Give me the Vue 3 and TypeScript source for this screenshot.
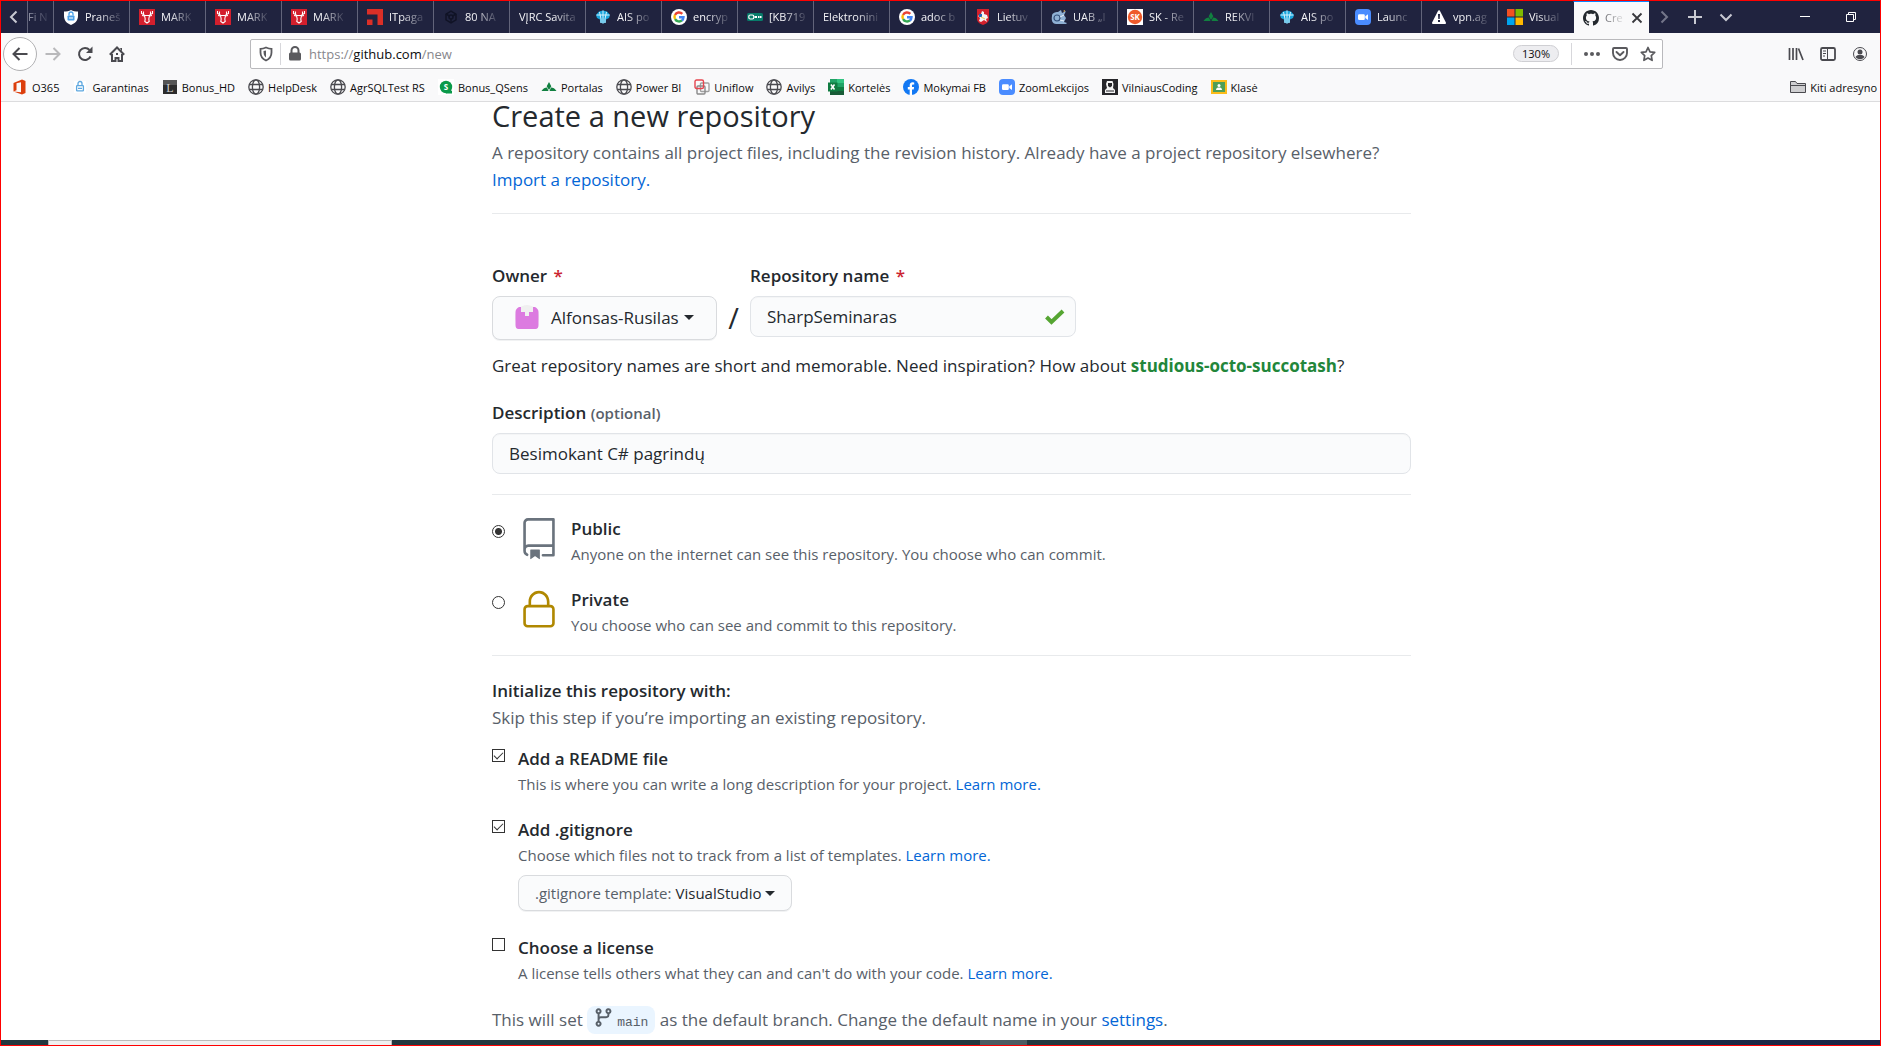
<script setup lang="ts">
import { ref } from 'vue'

interface Entry { title: string; icon: string }

const tabs: Entry[] = [
  { title: 'Praneš', icon: 'shield' },
  { title: 'MARK', icon: 'moose' },
  { title: 'MARK', icon: 'moose' },
  { title: 'MARK', icon: 'moose' },
  { title: 'ITpaga', icon: 'it' },
  { title: '80 NA', icon: 'hex' },
  { title: 'VĮRC Savita', icon: '' },
  { title: 'AIS po', icon: 'ais' },
  { title: 'encryp', icon: 'google' },
  { title: '[KB719', icon: 'kb' },
  { title: 'Elektronini', icon: '' },
  { title: 'adoc b', icon: 'google' },
  { title: 'Lietuv', icon: 'vytis' },
  { title: 'UAB „I', icon: 'bird' },
  { title: 'SK - Re', icon: 'sk' },
  { title: 'REKVI', icon: 'leaf' },
  { title: 'AIS po', icon: 'ais' },
  { title: 'Launc', icon: 'zoom' },
  { title: 'vpn.ag', icon: 'warn' },
  { title: 'Visual', icon: 'ms' },
]

const marks: Entry[] = [
  { title: 'O365', icon: 'office' },
  { title: 'Garantinas', icon: 'padlock' },
  { title: 'Bonus_HD', icon: 'lbox' },
  { title: 'HelpDesk', icon: 'globe' },
  { title: 'AgrSQLTest RS', icon: 'globe' },
  { title: 'Bonus_QSens', icon: 'qs' },
  { title: 'Portalas', icon: 'leaf' },
  { title: 'Power BI', icon: 'globe' },
  { title: 'Uniflow', icon: 'uni' },
  { title: 'Avilys', icon: 'globe' },
  { title: 'Kortelės', icon: 'excel' },
  { title: 'Mokymai FB', icon: 'fb' },
  { title: 'ZoomLekcijos', icon: 'zoom' },
  { title: 'VilniausCoding', icon: 'hood' },
  { title: 'Klasė', icon: 'klase' },
]

const art: Record<string, string> = {
  shield: '<path fill="#fff" d="M8 1c2 1 4.500 1.500 7 1.500V7c0 4.500-3 7.500-7 9-4-1.500-7-4.500-7-9V2.500C3.500 2.500 6 2 8 1z"/><rect x="4.500" y="6.500" width="7" height="5" rx=".8" fill="#4a9fe8"/><path d="M6 6.500V5a2 2 0 0 1 4 0v1.500" fill="none" stroke="#4a9fe8" stroke-width="1.300"/><path d="M6 9h4" stroke="#fff"/>',
  moose: '<path fill="#d31f2d" d="M0 0h16v16H0z"/><g fill="none" stroke="#fff" stroke-width="1.100"><path d="M2.500 2v2.500L5.500 6M13.500 2v2.500L10.500 6M4.500 2.500V5M11.500 2.500V5M3 6.500l2.500.5M13 6.500l-2.500.5M5.500 6.500h5L9.800 10l.4 2.500L8 14l-2.200-1.500.4-2.500z"/></g>',
  it: '<path fill="#dc2f27" d="M0 0h16v16h-5.500V5.500H0zM0 10.500h5.500V16H0z"/>',
  hex: '<g fill="none" stroke="#101326" stroke-width="1.500"><path d="M8 2.200l5 2.900v5.800l-5 2.900-5-2.900V5.100z"/><circle cx="8" cy="8" r="2"/><path d="M3 5l3.500 2M13 5L9.500 7M8 10v4"/></g>',
  ais: '<path fill="#1aa5dc" d="M4 2.500l4-1 4 1L15 6l-1 3-3 1.500v3L8 14.500l-3-1v-3L2 9 1 6z"/><path fill="none" stroke="#e8f8ff" stroke-width=".9" d="M1.500 6h13M8 1.500v13M4.500 3L6 10v4M11.500 3L10 10v4"/>',
  google: '<circle cx="8" cy="8" r="8" fill="#fff"/><g fill="none" stroke-width="2.400"><path stroke="#ea4335" d="M4 6A4.500 4.500 0 0 1 11.300 4.900"/><path stroke="#fbbc05" d="M4.100 10.200A4.500 4.500 0 0 1 4 5.900"/><path stroke="#34a853" d="M11 11.400A4.500 4.500 0 0 1 4.100 10.100"/><path stroke="#4285f4" d="M8 8.200h4.500A4.500 4.500 0 0 1 10.900 11.500"/></g>',
  kb: '<rect y="4" width="16" height="8" rx="1.500" fill="#087b6a"/><rect x="1.800" y="6" width="5" height="4" rx="1.500" fill="none" stroke="#fff" stroke-width="1.200"/><path fill="#fff" d="M7.500 7H10v2H7.500zM11 7h1.500v2H11zM13 7h1.500v2H13z"/>',
  vytis: '<path fill="#d2202c" d="M2 0h12v10c0 3-3 5-6 6-3-1-6-3-6-6z"/><path fill="#f3f3f3" d="M4 12l1-3-2-2 3-2 1-3 2 1v2l3 1 1 3-2 1 1 3-3-2-3 2z"/><path fill="#2467b5" d="M4 5h3v3H4z"/><path stroke="#f2c84b" d="M6 8l4 2"/>',
  bird: '<path fill="#8fb0d4" d="M1 7c0-3 3-4 6-4l3-2 1 3 4-2-2 4 2 3-2 4 3 1-1 1H5c-3 0-5-3-4-8z"/><circle cx="6" cy="9" r="3" fill="none" stroke="#34507a" stroke-width="1.200"/><path stroke="#e9f0f8" d="M9 8l4-2M9 11l4 1"/><path fill="#d7a953" d="M12 2l2-1v2z"/>',
  sk: '<path fill="#fff" d="M0 0h16v16H0z"/><circle cx="8" cy="8" r="7.200" fill="#ee5a2b"/><text x="8" y="11" font-size="8" font-weight="700" text-anchor="middle" fill="#fff" font-family="Open Sans">SK</text>',
  leaf: '<path fill="#118040" d="M8 3l2.300 4.200L8 11 5.700 7.200zM.5 12C2 9.500 4 8.500 6 8.500l1.500 3.500zM15.500 12C14 9.500 12 8.500 10 8.500L8.500 12z"/>',
  zoom: '<rect width="16" height="16" rx="4" fill="#4a8cff"/><rect x="3" y="5.200" width="6.800" height="5.800" rx="1.200" fill="#fff"/><path fill="#fff" d="M10.300 7.300L13 5.300v5.600l-2.700-2z"/>',
  warn: '<path fill="#fff" stroke="#fff" stroke-width="2" stroke-linejoin="round" d="M8 2.200L14 14H2z"/><path fill="#20233f" d="M7 5h2l-.3 5H7.300zM7 11h2v2H7z"/>',
  ms: '<path fill="#f25022" d="M0 0h7.500v7.500H0z"/><path fill="#7fba00" d="M8.500 0H16v7.500H8.500z"/><path fill="#00a4ef" d="M0 8.500h7.500V16H0z"/><path fill="#ffb900" d="M8.500 8.500H16V16H8.500z"/>',
  github: '<path fill="#24292e" fill-rule="evenodd" d="M8 0C3.580 0 0 3.580 0 8c0 3.540 2.290 6.530 5.470 7.590.4.070.55-.17.55-.38 0-.19-.01-.82-.01-1.490-2.010.37-2.530-.49-2.690-.94-.09-.23-.48-.94-.82-1.130-.28-.15-.68-.52-.01-.53.63-.01 1.080.58 1.230.82.72 1.210 1.870.87 2.330.66.07-.52.28-.87.51-1.070-1.780-.2-3.640-.89-3.640-3.950 0-.87.31-1.590.82-2.150-.08-.2-.36-1.020.08-2.120 0 0 .67-.21 2.200.82.64-.18 1.320-.27 2-.27s1.360.09 2 .27c1.530-1.040 2.200-.82 2.200-.82.44 1.100.16 1.920.08 2.120.51.56.82 1.270.82 2.150 0 3.070-1.870 3.750-3.650 3.950.29.25.54.73.54 1.480 0 1.070-.01 1.930-.01 2.200 0 .21.15.46.55.38A8.010 8.010 0 0 0 16 8c0-4.420-3.580-8-8-8z"/>',
  office: '<path fill="#dc3e0c" d="M1.500 4L10 .5 13.500 2v12L10 15.500 1.500 12.500l7.500.8V3.200L4.500 4.300v7L1.500 12.500z"/>',
  padlock: '<path fill="#fff" d="M2 2h12v12H2z"/><rect x="4.600" y="6.600" width="6.800" height="5.300" rx=".6" fill="none" stroke="#5ea8e0" stroke-width="1.300"/><path d="M6 6.500V4.500a2 2 0 0 1 4 0v2M6 9.300h4" fill="none" stroke="#5ea8e0" stroke-width="1.300"/>',
  lbox: '<path fill="#2c2c2c" d="M1 1h14v14H1z"/><path fill="#555" d="M1 1h14v5H1z"/><text x="8" y="13" font-size="12" text-anchor="middle" fill="#ccc" font-family="Liberation Serif">L</text>',
  globe: '<g fill="none" stroke="#4a4a4f" stroke-width="1.300"><circle cx="8" cy="8" r="7.200"/><ellipse cx="8" cy="8" rx="3.600" ry="7.200"/><path d="M1.500 5.500h13M1.500 10.500h13"/></g>',
  qs: '<path fill="#fff" d="M0 0h16v16H0z"/><circle cx="8" cy="8" r="6.200" fill="#0a9a4a"/><path fill="#0a9a4a" d="M8 8l6 4v2.500H8z"/><text x="8" y="11" font-size="8" font-weight="700" text-anchor="middle" fill="#fff" font-family="Open Sans">S</text>',
  uni: '<g fill="none" stroke-width="1.400"><rect x="6.500" y="4" width="8.500" height="8.500" rx="1" stroke="#a0a0a0"/><rect x="3" y="7" width="8" height="8" rx="1" stroke="#8a8a8a"/><rect x="1" y="1" width="8.500" height="8.500" rx="1.500" stroke="#e6454f"/></g>',
  excel: '<path fill="#21a366" d="M2 0h14v8H2z"/><path fill="#33c481" d="M9 0h7v4H9z"/><path fill="#107c41" d="M9 8h7v4H9z"/><path fill="#185c37" d="M2 8h7v4h7v4H2z"/><path fill="#107c41" d="M0 3.500h9.500v9H0z"/><path stroke="#fff" stroke-width="1.500" d="M2.900 5.500l3.600 5M6.500 5.500l-3.600 5"/>',
  fb: '<circle cx="8" cy="8" r="8" fill="#1278f3"/><path fill="#fff" d="M6.700 16v-5.500H4.800V8h1.900V6.300c0-2 1.200-3 2.900-3l1.600.1v2.100h-1c-.9 0-1.200.5-1.200 1.100V8h2.100l-.4 2.500H9V16z"/>',
  hood: '<path fill="#26262a" d="M0 0h16v16H0z"/><path fill="#f3f3f3" d="M5 2h5.500l1 3-.5 4 2 2v3H3v-3l2-2-1-4z"/><path fill="#26262a" d="M6 4h4v3l-2 1.500L6 7z"/><path stroke="#26262a" d="M4 12h8"/>',
  klase: '<path fill="#fbbc1a" d="M0 1h16v14H0z"/><path fill="#4f9e57" d="M2 3h12v10H2z"/><circle cx="8" cy="6.500" r="1.500" fill="#fff"/><path fill="#fff" d="M5 11c0-2 1.500-2.500 3-2.500s3 .5 3 2.500z"/>',
}

const repoName = ref('SharpSeminaras')
const description = ref('Besimokant C# pagrindų')
const visibility = ref('public')
const readme = ref(true)
const gitignore = ref(true)
const license = ref(false)
</script>

<template>
  <div class="window">
    <header class="tabstrip">
      <button class="scroll-tabs" aria-label="Scroll tabs left">
        <svg width="16" height="16" viewBox="0 0 16 16"><path d="M10.500 2.500L5 8l5.500 5.500" fill="none" stroke="#c8c9d2" stroke-width="2" /></svg>
      </button>
      <div class="tab cut"><span class="tab-title">Fi N</span></div>
      <div v-for="(t, i) in tabs" :key="i" class="tab">
        <svg v-if="t.icon" class="fav" viewBox="0 0 16 16" v-html="art[t.icon]" />
        <span class="tab-title">{{ t.title }}</span>
      </div>
      <div class="tab active">
        <svg class="fav" viewBox="0 0 16 16" v-html="art.github" />
        <span class="tab-title">Cre</span>
        <button class="close" aria-label="Close tab">
          <svg width="12" height="12" viewBox="0 0 12 12"><path d="M1.500 1.500l9 9M10.500 1.500l-9 9" stroke="#38383d" stroke-width="1.800" /></svg>
        </button>
      </div>
      <div class="strip-tools">
        <button aria-label="Scroll tabs right"><svg width="16" height="16" viewBox="0 0 16 16"><path d="M5.500 2.500L11 8l-5.500 5.500" fill="none" stroke="#74768a" stroke-width="2" /></svg></button>
        <button aria-label="New tab"><svg width="16" height="16" viewBox="0 0 16 16"><path d="M8 1v14M1 8h14" stroke="#c8c9d2" stroke-width="2" /></svg></button>
        <button aria-label="List all tabs"><svg width="16" height="16" viewBox="0 0 16 16"><path d="M2.500 5.500L8 11l5.500-5.500" fill="none" stroke="#c8c9d2" stroke-width="2" /></svg></button>
      </div>
      <div class="win-tools">
        <button aria-label="Minimize"><svg width="12" height="12" viewBox="0 0 12 12"><path d="M1 5.500h10" stroke="#fff" /></svg></button>
        <button aria-label="Restore"><svg width="12" height="12" viewBox="0 0 12 12"><path d="M1.500 3.500h7v7h-7zM3.500 3.500v-2h7v7h-2" fill="none" stroke="#fff" /></svg></button>
      </div>
    </header>

    <nav class="toolbar">
      <div class="nav-buttons">
        <button class="back" aria-label="Back"><svg width="16" height="16" viewBox="0 0 16 16"><path d="M15.500 8H1.500M7.500 2L1.500 8l6 6" fill="none" stroke="#4a4a4f" stroke-width="2" /></svg></button>
        <button aria-label="Forward"><svg width="16" height="16" viewBox="0 0 16 16"><path d="M.5 8h14M8.500 2l6 6-6 6" fill="none" stroke="#b9b9bb" stroke-width="2" /></svg></button>
        <button aria-label="Reload"><svg width="16" height="16" viewBox="0 0 16 16"><path d="M13.500 10.500A6 6 0 1 1 12.500 4" fill="none" stroke="#4a4a4f" stroke-width="2" /><path fill="#4a4a4f" d="M15.500.5v6.500H9z" /></svg></button>
        <button aria-label="Home"><svg width="16" height="16" viewBox="0 0 16 16"><path d="M.8 8.700L8 1.500l7.200 7.200" fill="none" stroke="#4a4a4f" stroke-width="2" /><path d="M3 8v7h3.500v-3h3v3H13V8" fill="none" stroke="#4a4a4f" stroke-width="2" /><path fill="#4a4a4f" d="M7 7h2v2H7zM11 2h2v4z" /></svg></button>
      </div>
      <div class="urlbar">
        <svg width="14" height="16" viewBox="0 0 14 16"><path d="M7 1.500c2 .9 4 1.300 5.500 1.300v3.700c0 4-2.200 6.500-5.500 8-3.300-1.500-5.500-4-5.500-8V2.800C3 2.800 5 2.400 7 1.500z" fill="none" stroke="#5a5a5e" stroke-width="1.800" /><path fill="#5a5a5e" d="M7 4.500v7C5 10 4.500 8.500 4.500 5z" /></svg>
        <span class="sep" />
        <svg width="14" height="16" viewBox="0 0 14 16"><rect x="1" y="6.500" width="12" height="8" rx="1.500" fill="#5a5a5e" /><path d="M3.500 7V4.500a3.500 3.500 0 0 1 7 0V7" fill="none" stroke="#5a5a5e" stroke-width="2" /></svg>
        <span class="url">https://<b>github.com</b>/new</span>
        <button class="zoom">130%</button>
        <span class="sep tall" />
        <button aria-label="Page actions"><svg width="16" height="16" viewBox="0 0 16 16"><circle cx="2" cy="8" r="2" fill="#5a5a5e" /><circle cx="8" cy="8" r="2" fill="#5a5a5e" /><circle cx="14" cy="8" r="2" fill="#5a5a5e" /></svg></button>
        <button aria-label="Save to Pocket"><svg width="16" height="16" viewBox="0 0 16 16"><path d="M2 2h12a1 1 0 0 1 1 1v4A7 7 0 0 1 1 7V3a1 1 0 0 1 1-1zM4.500 6L8 9.300 11.500 6" fill="none" stroke="#5a5a5e" stroke-width="1.900" stroke-linejoin="round" stroke-linecap="round" /></svg></button>
        <button aria-label="Bookmark page"><svg width="16" height="16" viewBox="0 0 16 16"><path d="M8 1.500l2 4.300 4.700.6-3.400 3.200.8 4.700L8 12l-4.100 2.300.8-4.700L1.300 6.400 6 5.800z" fill="none" stroke="#5a5a5e" stroke-width="1.700" stroke-linejoin="round" /></svg></button>
      </div>
      <div class="right-tools">
        <button aria-label="Library"><svg width="16" height="16" viewBox="0 0 16 16"><path d="M1.500 2v12M5 2v12M8.500 2v12M10.500 2.500l4.500 11.500" stroke="#4a4a4f" stroke-width="1.700" /></svg></button>
        <button aria-label="Sidebars"><svg width="16" height="16" viewBox="0 0 16 16"><rect x="1" y="2" width="14" height="12" rx="1.500" fill="none" stroke="#4a4a4f" stroke-width="1.800" /><path d="M7.500 2v12M3 5h3M3 7.500h3M3 10h2" stroke="#4a4a4f" /></svg></button>
        <button aria-label="Account"><svg width="16" height="16" viewBox="0 0 16 16"><circle cx="8" cy="8" r="6.500" fill="none" stroke="#4a4a4f" /><circle cx="8" cy="6" r="2.500" fill="#4a4a4f" /><path fill="#4a4a4f" d="M3.500 11c1-1.800 2.500-2 4.500-2s3.500.2 4.500 2c-2.500 3-6.500 3-9 0z" /></svg></button>
      </div>
    </nav>

    <nav class="bookmarks">
      <a v-for="m in marks" :key="m.title" href="#" class="mark">
        <svg class="fav" viewBox="0 0 16 16" v-html="art[m.icon]" />{{ m.title }}
      </a>
      <a href="#" class="mark other">
        <svg class="fav" viewBox="0 0 16 16"><path d="M.5 13.500v-11h5l1.500 2h8.500v9zM.5 6.500h15" fill="#cfcfd1" stroke="#4a4a4f" /></svg>Kiti adresyno
      </a>
    </nav>

    <main class="page">
      <form class="form" @submit.prevent>
        <h1>Create a new repository</h1>
        <p class="lead muted">A repository contains all project files, including the revision history. Already have a project repository elsewhere?<br><a href="#">Import a repository.</a></p>
        <hr>
        <div class="name-row">
          <div class="field owner">
            <label for="owner">Owner <span class="req">*</span></label>
            <button id="owner" class="btn owner-btn" type="button">
              <svg width="24" height="24" viewBox="0 0 24 24"><circle cx="12" cy="12" r="12" fill="#f0f0f0" /><path fill="#dc7be0" d="M4 2h2v5h4v4h4V7h4V2h2q3.500 2 3.500 5v13q0 4-3 4h-17q-3 0-3-4V7Q.5 4 4 2z" /></svg>
              <span>Alfonsas-Rusilas</span><i class="caret" />
            </button>
          </div>
          <span class="slash">/</span>
          <div class="field">
            <label for="repo">Repository name <span class="req">*</span></label>
            <div class="checked">
              <input id="repo" v-model="repoName" class="text" type="text">
              <svg width="22" height="18" viewBox="0 0 22 18"><path d="M2.500 9l5 5L19 3" fill="none" stroke="#55a532" stroke-width="4" /></svg>
            </div>
          </div>
        </div>
        <p class="hint">Great repository names are short and memorable. Need inspiration? How about <strong>studious-octo-succotash</strong>?</p>
        <div class="field desc">
          <label for="desc">Description <small>(optional)</small></label>
          <input id="desc" v-model="description" class="text" type="text">
        </div>
        <hr>
        <div class="visibility">
          <div class="choice">
            <input id="public" v-model="visibility" type="radio" value="public">
            <svg width="42" height="42" viewBox="0 0 24 24"><path fill="#6a737d" fill-rule="evenodd" d="M3 2.750A2.750 2.750 0 0 1 5.750 0h14.500a.75.75 0 0 1 .75.75v20.500a.75.75 0 0 1-.75.75h-6a.75.75 0 0 1 0-1.500h5.250v-4H6A1.500 1.500 0 0 0 4.500 18v.75c0 .716.430 1.334 1.050 1.605a.75.75 0 0 1-.6 1.374A3.250 3.250 0 0 1 3 18.750v-16zM19.500 1.500V15H6c-.546 0-1.059.146-1.500.401V2.750c0-.69.56-1.250 1.250-1.250H19.500z" /><path fill="#6a737d" d="M7 18.250a.25.25 0 0 1 .25-.25h5a.25.25 0 0 1 .25.25v5.010a.25.25 0 0 1-.397.201l-2.206-1.604a.25.25 0 0 0-.294 0L7.397 23.460a.25.25 0 0 1-.397-.2v-5.010z" /></svg>
            <div><label for="public">Public</label><p class="note">Anyone on the internet can see this repository. You choose who can commit.</p></div>
          </div>
          <div class="choice">
            <input id="private" v-model="visibility" type="radio" value="private">
            <svg width="42" height="42" viewBox="0 0 24 24"><path fill="#b08800" fill-rule="evenodd" d="M6 9V7.250C6 3.845 8.503 1 12 1s6 2.845 6 6.250V9h.5a2.500 2.500 0 0 1 2.500 2.500v8a2.500 2.500 0 0 1-2.500 2.500h-13A2.500 2.500 0 0 1 3 19.500v-8A2.500 2.500 0 0 1 5.500 9H6zm1.500-1.750C7.500 4.580 9.422 2.500 12 2.500c2.578 0 4.500 2.080 4.500 4.750V9h-9V7.250zm-3 4.250a1 1 0 0 1 1-1h13a1 1 0 0 1 1 1v8a1 1 0 0 1-1 1h-13a1 1 0 0 1-1-1v-8z" /></svg>
            <div><label for="private">Private</label><p class="note">You choose who can see and commit to this repository.</p></div>
          </div>
        </div>
        <hr>
        <section class="init">
          <h2>Initialize this repository with:</h2>
          <p class="muted">Skip this step if you’re importing an existing repository.</p>
          <div class="options">
            <div class="option">
              <input id="readme" v-model="readme" type="checkbox">
              <div><label for="readme">Add a README file</label><p class="note">This is where you can write a long description for your project. <a href="#">Learn more.</a></p></div>
            </div>
            <div class="option">
              <input id="gitignore" v-model="gitignore" type="checkbox">
              <div>
                <label for="gitignore">Add .gitignore</label><p class="note">Choose which files not to track from a list of templates. <a href="#">Learn more.</a></p>
                <button class="btn template" type="button"><span class="muted">.gitignore template:</span> <span>VisualStudio</span><i class="caret" /></button>
              </div>
            </div>
            <div class="option">
              <input id="license" v-model="license" type="checkbox">
              <div><label for="license">Choose a license</label><p class="note">A license tells others what they can and can't do with your code. <a href="#">Learn more.</a></p></div>
            </div>
          </div>
        </section>
        <p class="branch-line muted">This will set <span class="branch"><svg width="21" height="21" viewBox="0 0 16 16"><path fill="#586069" fill-rule="evenodd" d="M11.750 2.500a.75.75 0 1 0 0 1.500.75.75 0 0 0 0-1.500zm-2.250.75a2.250 2.250 0 1 1 3 2.122V6A2.500 2.500 0 0 1 10 8.500H6a1 1 0 0 0-1 1v1.128a2.251 2.251 0 1 1-1.500 0V5.372a2.250 2.250 0 1 1 1.500 0v1.836A2.492 2.492 0 0 1 6 7h4a1 1 0 0 0 1-1v-.628A2.250 2.250 0 0 1 9.500 3.250zM4.250 12a.75.75 0 1 0 0 1.500.75.75 0 0 0 0-1.500zM3.500 3.250a.75.75 0 1 1 1.500 0 .75.75 0 0 1-1.500 0z" /></svg><code>main</code></span> as the default branch. Change the default name in your <a href="#">settings</a>.</p>
      </form>
    </main>
    <footer class="desktop-edge"><span class="peek" /><span class="thumb" /></footer>
  </div>
</template>

<style>
body { margin: 0; background: #fff; }
</style>

<style scoped>
.window {
  box-sizing: border-box;
  min-height: 100vh;
  display: flex;
  flex-direction: column;
  border: 1px solid #f00;
  overflow: hidden;
  font-family: "Open Sans", "Noto Sans", sans-serif;
  color: #24292e;
}
button { font: inherit; color: inherit; border: 0; padding: 0; background: none; display: inline-flex; align-items: center; }
a { color: #0366d6; text-decoration: none; }
p, h1, h2 { margin: 0; }
svg { flex: none; display: block; }
.fav { width: 16px; height: 16px; }

.tabstrip { height: 32px; display: flex; background: #20233f; font-size: 11px; }
.scroll-tabs { width: 26px; justify-content: center; }
.tab {
  box-sizing: border-box;
  width: 76px;
  flex: none;
  display: flex;
  align-items: center;
  gap: 6px;
  padding: 0 0 0 9px;
  border-left: 1px solid #62647a;
  color: #f5f5f8;
}
.tab-title {
  line-height: 20px;
  white-space: nowrap;
  mask-image: linear-gradient(to right, #000 calc(100% - 22px), rgb(0 0 0 / 15%));
}
.tab.cut { width: 26px; padding: 0; color: #a5a7b8; }
.tab.active { background: #f9f9fa; color: #55555a; border-left-color: #20233f; border-top: 1px solid #0a84ff; }
.close { padding: 0 2px; margin: 0 9px 0 auto; }
.strip-tools { display: flex; gap: 15px; padding-left: 7px; }
.win-tools { display: flex; gap: 34px; margin-left: auto; padding-right: 23px; }

.toolbar { display: flex; align-items: center; height: 41px; background: #f9f9fa; }
.nav-buttons { width: 249px; display: flex; align-items: center; gap: 16px; }
.nav-buttons .back { box-sizing: border-box; width: 34px; height: 34px; margin: 0 -8px 0 2px; justify-content: center; border: 1px solid #b1b1b3; border-radius: 50%; background: #fff; }
.urlbar {
  flex: 1;
  box-sizing: border-box;
  height: 30px;
  display: flex;
  align-items: center;
  gap: 7px;
  padding: 0 6px 0 8px;
  background: #fff;
  border: 1px solid #b9b9bc;
  border-radius: 2px;
  font-size: 13px;
}
.sep { width: 1px; height: 22px; background: #d7d7db; }
.url { flex: 1; color: #87878c; }
.url b { font-weight: 400; color: #0c0c0d; }
.zoom { box-sizing: border-box; height: 17px; padding: 0 8px; border: 1px solid #cfcfd3; border-radius: 9px; background: #ededf0; font-size: 11px; color: #0c0c0d; }
.sep.tall { margin: 0 5px; }
.urlbar button + button { margin-left: 5px; }
.right-tools { width: 217px; display: flex; justify-content: flex-end; gap: 16px; padding-right: 12px; box-sizing: border-box; }

.bookmarks {
  box-sizing: border-box;
  height: 28px;
  display: flex;
  align-items: center;
  gap: 13px;
  padding: 0 3px 1px 11px;
  background: #f9f9fa;
  border-bottom: 1px solid #dcdcde;
  font-size: 11px;
}
.mark { display: flex; align-items: center; gap: 4px; color: #0c0c0d; white-space: nowrap; }
.other { margin-left: auto; }

.page { flex: 1; padding-left: 22px; font-size: 17px; line-height: 27px; }
.form { width: 919px; max-width: 100%; margin: 0 auto; }
h1 { font-size: 29px; line-height: 28px; font-weight: 400; }
h2 { font-size: 17px; font-weight: 600; }
.muted { color: #586069; }
.lead { margin-top: 9px; }
hr { height: 1px; margin: 20px 0; border: 0; background: #e8eaec; }
label { font-weight: 600; }
.req { color: #cb2431; margin-left: 2px; }
.name-row { display: flex; align-items: flex-start; margin-top: 48px; }
.field { display: flex; flex-direction: column; gap: 7px; }
.owner { width: 225px; }
.btn {
  box-sizing: border-box;
  border: 1px solid #d9dbde;
  border-radius: 8px;
  background: #fafbfc;
  box-shadow: 0 1px 0 #f1f2f3;
}
.owner-btn { height: 44px; padding: 0 0 2px 22px; }
.owner-btn span { margin-left: 12px; }
.caret { margin-left: 5px; border: 5px solid transparent; border-top-color: currentColor; border-bottom: 0; }
.slash { width: 33px; text-align: center; font-size: 29px; line-height: 44px; margin-top: 34px; }
.checked { position: relative; width: 326px; }
.checked svg { position: absolute; right: 10px; top: 12px; }
.text {
  box-sizing: border-box;
  width: 100%;
  height: 41px;
  padding: 0 16px;
  border: 1px solid #e1e4e8;
  border-radius: 8px;
  background: #fafbfc;
  box-shadow: inset 0 1px 0 #f4f5f6;
  font: inherit;
  color: inherit;
}
.hint { margin-top: 12px; }
strong { color: #22863a; font-weight: 700; }
.field.desc { margin-top: 20px; gap: 6px; }
small { font-size: 15px; color: #586069; }
.visibility { display: flex; flex-direction: column; gap: 20px; margin-bottom: 18px; }
.visibility + hr { margin: 18px 0 21px; }
.choice { display: flex; align-items: flex-start; }
.choice svg { margin: 3px 11px 0 13px; }
.note { font-size: 15px; line-height: 24px; color: #586069; }
input[type="radio"], input[type="checkbox"] {
  appearance: none;
  box-sizing: border-box;
  flex: none;
  width: 13px;
  height: 13px;
  margin: 10px 0 0;
  border: 1px solid #333;
  background: #fff;
}
input[type="radio"] { border-radius: 50%; }
input[type="radio"]:checked { background: radial-gradient(circle, #333 3px, #fff 4px); }
input[type="checkbox"] { margin: 4px 13px 0 0; display: grid; place-items: center; }
input[type="checkbox"]:checked::before { content: ""; width: 9px; height: 5px; margin-top: -3px; box-sizing: border-box; border: solid #333; border-width: 0 0 1px 1px; transform: rotate(-45deg); }
.options { display: flex; flex-direction: column; gap: 20px; margin-top: 14px; }
.option { display: flex; align-items: flex-start; }
.template { height: 36px; margin: 8px 0 3px; padding: 0 16px; gap: 4px; font-size: 15px; }
.template .caret { margin-left: 0; }
.branch-line { margin: 21px 0 6px; white-space: nowrap; }
.branch { box-sizing: border-box; display: inline-flex; align-items: flex-start; gap: 3px; height: 28px; margin-bottom: -1px; padding: 1px 7px 0 6px; border-radius: 8px; background: #eaf5ff; vertical-align: top; }
code { padding-top: 2px; font: 13px/27px "Liberation Mono", monospace; }

.desktop-edge { height: 5px; display: flex; background: linear-gradient(to right, #22383f 60%, #1a2547); }
.peek { box-sizing: border-box; width: 344px; margin-left: 47px; background: #f0f0f0; border: 1px solid #bbb; border-bottom: 0; }
.thumb { width: 47px; margin-left: 588px; background: #4b5c62; }
</style>
